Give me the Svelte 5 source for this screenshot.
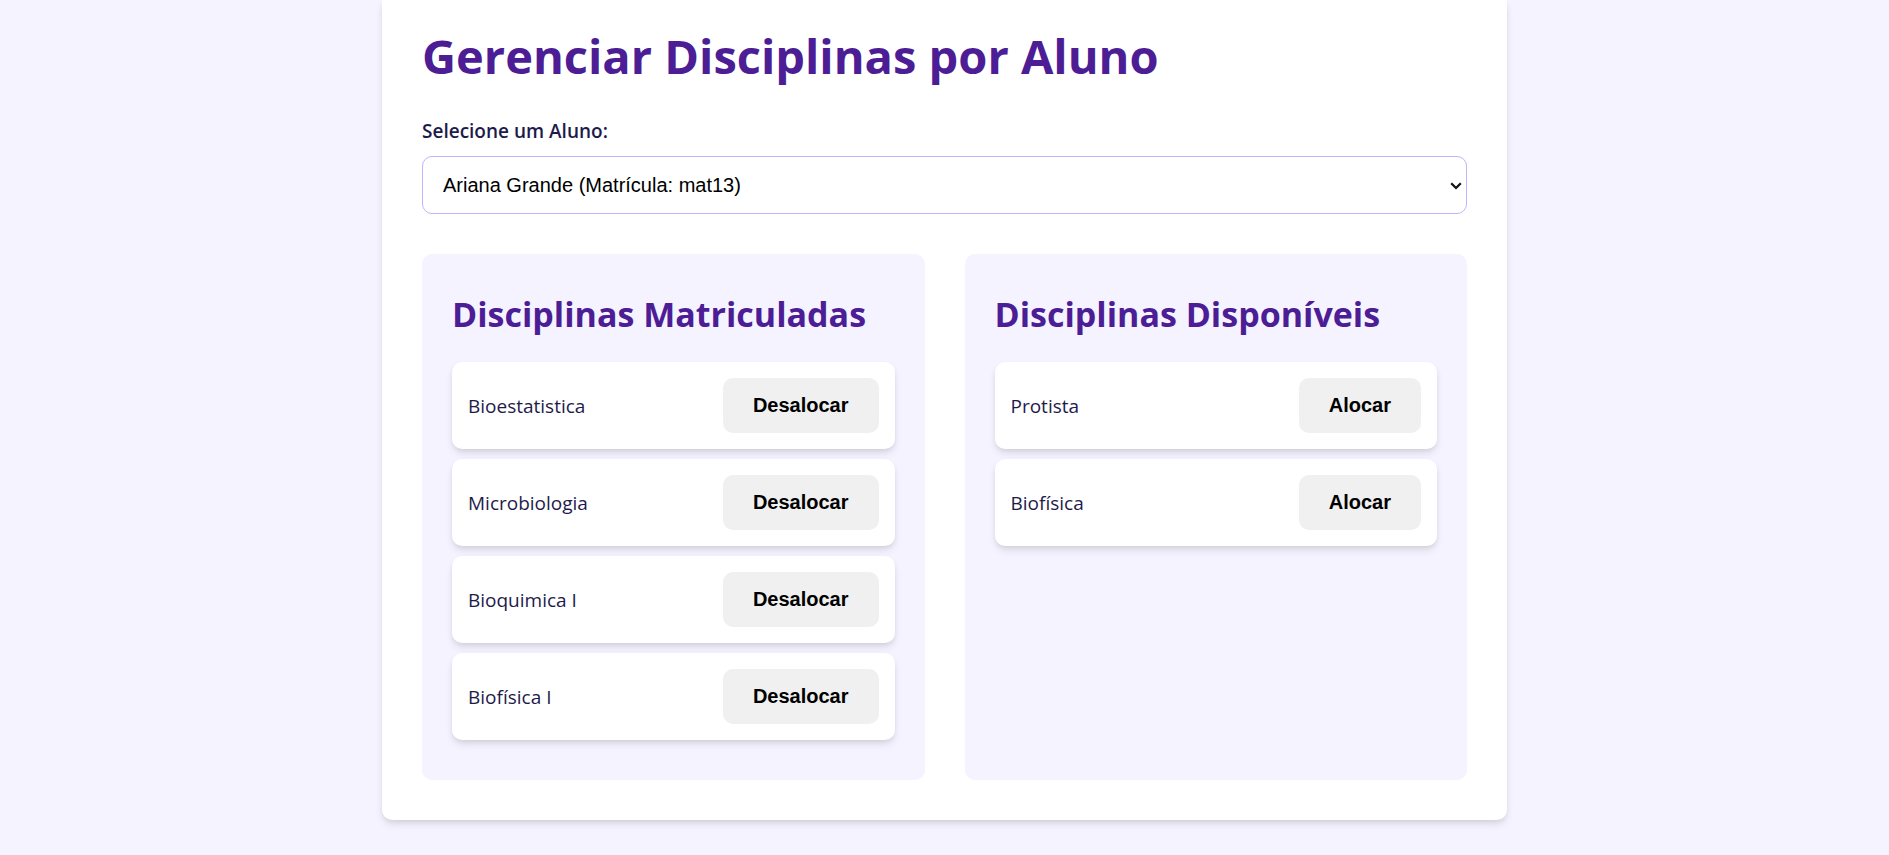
<script>
  let selected = $state('mat13');
  const enrolled = ['Bioestatistica', 'Microbiologia', 'Bioquimica I', 'Biofísica I'];
  const available = ['Protista', 'Biofísica'];
</script>

{#snippet panel(title, items, action)}
  <section class="panel">
    <h2>{title}</h2>
    <ul>
      {#each items as item}
        <li><span>{item}</span><button type="button">{action}</button></li>
      {/each}
    </ul>
  </section>
{/snippet}

<main>
  <h1>Gerenciar Disciplinas por Aluno</h1>
  <label for="student">Selecione um Aluno:</label>
  <div class="field">
    <select id="student" bind:value={selected}>
      <option value="mat13">Ariana Grande (Matrícula: mat13)</option>
    </select>
    <svg class="chevron" width="12" height="8" viewBox="0 0 12 8" aria-hidden="true">
      <path d="M1.2 1.2 L6 6 L10.8 1.2" fill="none" stroke="#101010" stroke-width="2.2" />
    </svg>
  </div>
  <div class="columns">
    {@render panel('Disciplinas Matriculadas', enrolled, 'Desalocar')}
    {@render panel('Disciplinas Disponíveis', available, 'Alocar')}
  </div>
</main>

<style>
  :global(body) {
    background: #f5f3ff;
    color: #1e1b4b;
    font-family: 'Segoe UI', 'Open Sans', 'Noto Sans', sans-serif;
    font-size: 19px;
    line-height: 30px;
  }
  main {
    box-sizing: border-box;
    max-width: 1125px;
    margin: 0 auto 35px;
    padding: 28px 40px 40px;
    background: #fff;
    border-radius: 0 0 10px 10px;
    box-shadow: 0 5px 8px -1px rgba(0, 0, 0, 0.11), 0 2px 5px -1px rgba(0, 0, 0, 0.07);
  }
  h1, h2 {
    margin: 0;
    color: #4c1d95;
    font-weight: 700;
  }
  h1 {
    margin-bottom: 32px;
    font-size: 47px;
    line-height: 56px;
  }
  label {
    display: block;
    margin-bottom: 10px;
    font-weight: 600;
  }
  .field {
    position: relative;
  }
  select {
    display: block;
    box-sizing: border-box;
    width: 100%;
    height: 58px;
    padding: 16px 20px;
    border: 1px solid #c0b4fc;
    border-radius: 10px;
    appearance: none;
    background: #fff;
    color: #000;
    font: 20px 'Liberation Sans', Arial, sans-serif;
  }
  .chevron {
    position: absolute;
    top: 26px;
    right: 5px;
    pointer-events: none;
  }
  .columns {
    display: grid;
    grid-template-columns: repeat(auto-fit, minmax(300px, 1fr));
    gap: 40px;
    margin-top: 40px;
  }
  .panel {
    padding: 30px 30px 40px;
    border-radius: 10px;
    background: #f5f3ff;
  }
  h2 {
    margin-bottom: 18px;
    font-size: 34px;
    line-height: 60px;
  }
  ul {
    display: grid;
    gap: 10px;
    margin: 0;
    padding: 0;
    list-style: none;
  }
  li {
    display: flex;
    align-items: center;
    justify-content: space-between;
    padding: 16px;
    border-radius: 10px;
    background: #fff;
    box-shadow: 0 5px 8px -1px rgba(0, 0, 0, 0.11), 0 2px 5px -1px rgba(0, 0, 0, 0.07);
  }
  button {
    padding: 16px 30px;
    border: 0;
    border-radius: 10px;
    background: #f0f0f0;
    color: #000;
    font: 700 20px/23px 'Liberation Sans', Arial, sans-serif;
    cursor: pointer;
  }
</style>
